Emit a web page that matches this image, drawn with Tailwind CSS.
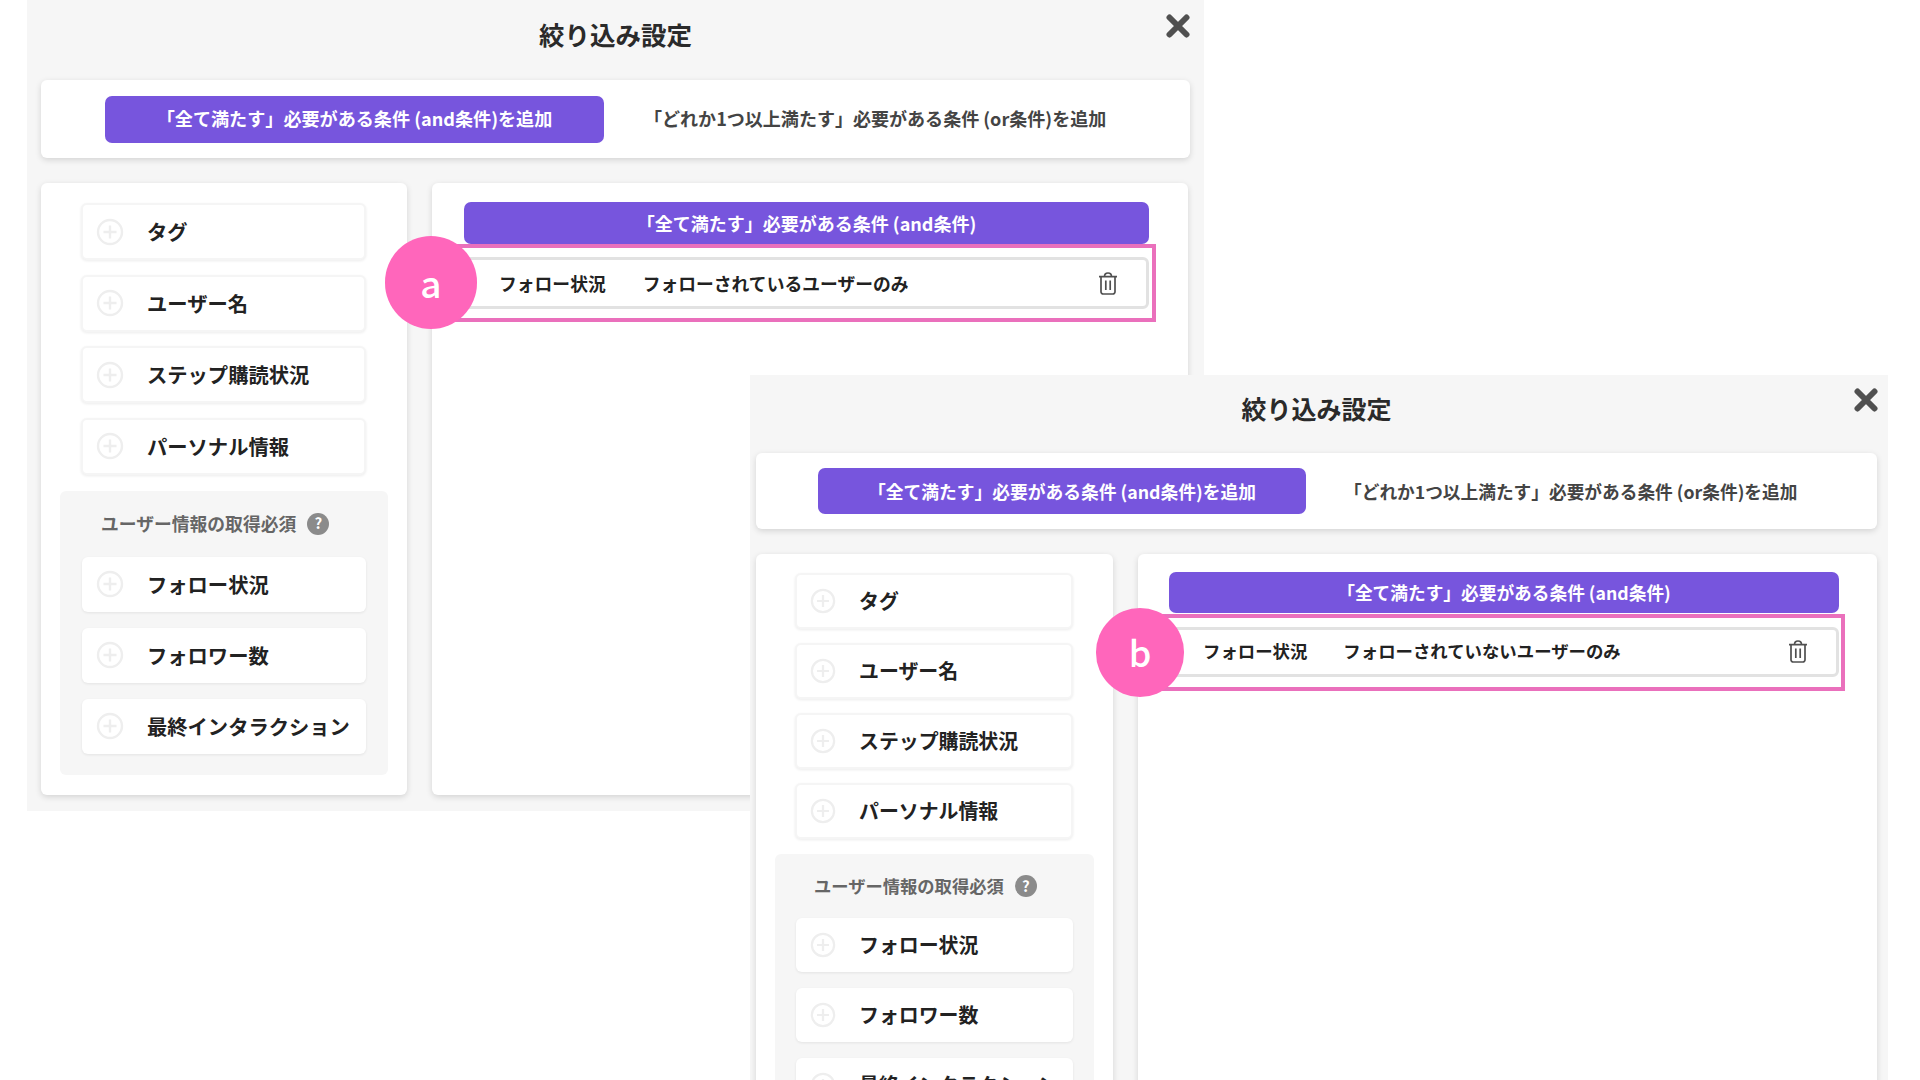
<!DOCTYPE html>
<html lang="ja">
  <head>
    <meta charset="UTF-8" />
    <title>絞り込み設定</title>
    <script src="https://cdn.jsdelivr.net/npm/@tailwindcss/browser@4"></script>
  </head>

  <body class="bg-white text-[#222] font-['Noto_Sans_CJK_JP',sans-serif] font-medium antialiased">
    <div class="relative w-[1920px] h-[1080px] overflow-hidden">

      <!-- ── Window a (back) ── -->
      <div class="absolute left-[27px] top-0 w-[1177px] h-[811px] bg-[#f6f6f6] px-[14px]">
        <div class="relative h-[80px] pt-[15px] text-center text-[25.5px] leading-[38px] font-bold text-[#2a2a2a]">
          絞り込み設定
          <svg class="absolute right-0 top-[14px] w-[24px] h-[24px]" viewBox="0 0 24 24" fill="none" stroke="#505050" stroke-width="6" stroke-linecap="round"><path d="M3.5 3.5 20.5 20.5M20.5 3.5 3.5 20.5" /></svg>
        </div>

        <!-- tab bar -->
        <div class="h-[78px] bg-white rounded-md shadow-[0_2px_6px_rgba(0,0,0,0.14)] flex items-center pl-[64px]">
          <div class="w-[499px] h-[47px] rounded-[7px] bg-[#7755dd] text-white text-[18.1px] font-bold flex items-center justify-center">「全て満たす」必要がある条件 (and条件)を追加</div>
          <div class="ml-[40px] text-[18.05px] font-bold text-[#444]">「どれか1つ以上満たす」必要がある条件 (or条件)を追加</div>
        </div>

        <div class="flex gap-[25px] mt-[25px]">
          <!-- left: field list -->
          <div class="w-[366px] h-[612px] bg-white rounded-md shadow-[0_2px_6px_rgba(0,0,0,0.14)] pt-[20px]">
            <div class="flex flex-col gap-[14.5px] pl-[40px] pr-[41px] text-[20.3px] font-bold">
              <div class="h-[57px] flex items-center bg-white rounded-md border-2 border-[#f5f5f5] shadow-[0_1px_3px_rgba(0,0,0,0.08)]">
                <svg class="ml-[13px] w-[28px] h-[28px] shrink-0" viewBox="0 0 28 28" fill="none" stroke="#eeeeee" stroke-width="2.4"><circle cx="14" cy="14" r="12" /><path d="M14 7.5v13M7.5 14h13" /></svg>
                <span class="ml-[23px]">タグ</span>
              </div>
              <div class="h-[57px] flex items-center bg-white rounded-md border-2 border-[#f5f5f5] shadow-[0_1px_3px_rgba(0,0,0,0.08)]">
                <svg class="ml-[13px] w-[28px] h-[28px] shrink-0" viewBox="0 0 28 28" fill="none" stroke="#eeeeee" stroke-width="2.4"><circle cx="14" cy="14" r="12" /><path d="M14 7.5v13M7.5 14h13" /></svg>
                <span class="ml-[23px]">ユーザー名</span>
              </div>
              <div class="h-[57px] flex items-center bg-white rounded-md border-2 border-[#f5f5f5] shadow-[0_1px_3px_rgba(0,0,0,0.08)]">
                <svg class="ml-[13px] w-[28px] h-[28px] shrink-0" viewBox="0 0 28 28" fill="none" stroke="#eeeeee" stroke-width="2.4"><circle cx="14" cy="14" r="12" /><path d="M14 7.5v13M7.5 14h13" /></svg>
                <span class="ml-[23px]">ステップ購読状況</span>
              </div>
              <div class="h-[57px] flex items-center bg-white rounded-md border-2 border-[#f5f5f5] shadow-[0_1px_3px_rgba(0,0,0,0.08)]">
                <svg class="ml-[13px] w-[28px] h-[28px] shrink-0" viewBox="0 0 28 28" fill="none" stroke="#eeeeee" stroke-width="2.4"><circle cx="14" cy="14" r="12" /><path d="M14 7.5v13M7.5 14h13" /></svg>
                <span class="ml-[23px]">パーソナル情報</span>
              </div>
            </div>
            <!-- gray group -->
            <div class="mx-[19px] mt-[16px] h-[284.5px] bg-[#f6f6f6] rounded-md">
              <div class="h-[66px] flex items-center pl-[41px] text-[17.8px] font-bold text-[#666]">
                ユーザー情報の取得必須
                <span class="ml-[11px] w-[22px] h-[22px] rounded-full bg-[#8b8b8b] text-white text-[15px] font-bold flex items-center justify-center">?</span>
              </div>
              <div class="flex flex-col gap-[16px] pl-[22px] pr-[22px] text-[20.3px] font-bold">
                <div class="h-[55px] flex items-center bg-white rounded-md shadow-[0_1px_3px_rgba(0,0,0,0.08)]">
                  <svg class="ml-[14px] w-[28px] h-[28px] shrink-0" viewBox="0 0 28 28" fill="none" stroke="#eeeeee" stroke-width="2.4"><circle cx="14" cy="14" r="12" /><path d="M14 7.5v13M7.5 14h13" /></svg>
                  <span class="ml-[23px]">フォロー状況</span>
                </div>
                <div class="h-[55px] flex items-center bg-white rounded-md shadow-[0_1px_3px_rgba(0,0,0,0.08)]">
                  <svg class="ml-[14px] w-[28px] h-[28px] shrink-0" viewBox="0 0 28 28" fill="none" stroke="#eeeeee" stroke-width="2.4"><circle cx="14" cy="14" r="12" /><path d="M14 7.5v13M7.5 14h13" /></svg>
                  <span class="ml-[23px]">フォロワー数</span>
                </div>
                <div class="h-[55px] flex items-center bg-white rounded-md shadow-[0_1px_3px_rgba(0,0,0,0.08)]">
                  <svg class="ml-[14px] w-[28px] h-[28px] shrink-0" viewBox="0 0 28 28" fill="none" stroke="#eeeeee" stroke-width="2.4"><circle cx="14" cy="14" r="12" /><path d="M14 7.5v13M7.5 14h13" /></svg>
                  <span class="ml-[23px] whitespace-nowrap">最終インタラクション</span>
                </div>
              </div>
            </div>
          </div>

          <!-- right: selected conditions -->
          <div class="relative w-[756px] h-[612px] bg-white rounded-md shadow-[0_2px_6px_rgba(0,0,0,0.14)] pt-[19px] pl-[32px] pr-[39px]">
            <div class="h-[42px] rounded-[7px] bg-[#7755dd] text-white text-[18px] font-bold flex items-center justify-center">「全て満たす」必要がある条件 (and条件)</div>
            <div class="mt-[13px] h-[52px] flex items-center bg-white rounded-md border-[3px] border-[#e2e2e2] pl-[32px] pr-[28px] text-[17.8px] font-bold">
              <span>フォロー状況</span>
              <span class="ml-[37px]">フォローされているユーザーのみ</span>
              <svg class="ml-auto w-[20px] h-[23px]" viewBox="0 0 20 23" fill="none" stroke="#505050" stroke-width="1.7"><path d="M1 4.6h18M6.5 4.4C6.5 2 8 1 10 1s3.5 1 3.5 3.4M3 4.6v15.2A2.2 2.2 0 0 0 5.2 22h9.6a2.2 2.2 0 0 0 2.2-2.2V4.6M7.8 8.5v9.5M12.2 8.5v9.5" /></svg>
            </div>
            <!-- annotation a -->
            <div class="absolute left-[8px] top-[61px] w-[716px] h-[78px] border-[4px] border-[#ea70bc]"></div>
            <div class="absolute left-[-47px] top-[53px] w-[92px] h-[93px] rounded-full bg-[#ff66bb] text-white text-[37px] flex items-center justify-center">a</div>
          </div>
        </div>
      </div>

      <!-- ── Window b (front) ── -->
      <div class="absolute left-[750px] top-[375px] w-[1138px] h-[705px] bg-[#f6f6f6] pl-[6px] pr-[11px] overflow-hidden">
        <div class="relative h-[78px] pt-[14px] text-center text-[25px] leading-[38px] font-bold text-[#2a2a2a]">
          絞り込み設定
          <svg class="absolute right-[-1px] top-[13px] w-[24px] h-[24px]" viewBox="0 0 24 24" fill="none" stroke="#505050" stroke-width="6" stroke-linecap="round"><path d="M3.5 3.5 20.5 20.5M20.5 3.5 3.5 20.5" /></svg>
        </div>

        <div class="h-[76px] bg-white rounded-md shadow-[0_2px_6px_rgba(0,0,0,0.14)] flex items-center pl-[62px]">
          <div class="w-[488px] h-[46px] rounded-[7px] bg-[#7755dd] text-white text-[17.75px] font-bold flex items-center justify-center">「全て満たす」必要がある条件 (and条件)を追加</div>
          <div class="ml-[38px] text-[17.7px] font-bold text-[#444]">「どれか1つ以上満たす」必要がある条件 (or条件)を追加</div>
        </div>

        <div class="flex gap-[25px] mt-[25px]">
          <div class="w-[357px] h-[600px] bg-white rounded-md shadow-[0_2px_6px_rgba(0,0,0,0.14)] pt-[19px]">
            <div class="flex flex-col gap-[14px] pl-[39px] pr-[40px] text-[19.9px] font-bold">
              <div class="h-[56px] flex items-center bg-white rounded-md border-2 border-[#f5f5f5] shadow-[0_1px_3px_rgba(0,0,0,0.08)]">
                <svg class="ml-[13px] w-[26px] h-[26px] shrink-0" viewBox="0 0 28 28" fill="none" stroke="#eeeeee" stroke-width="2.4"><circle cx="14" cy="14" r="12" /><path d="M14 7.5v13M7.5 14h13" /></svg>
                <span class="ml-[23px]">タグ</span>
              </div>
              <div class="h-[56px] flex items-center bg-white rounded-md border-2 border-[#f5f5f5] shadow-[0_1px_3px_rgba(0,0,0,0.08)]">
                <svg class="ml-[13px] w-[26px] h-[26px] shrink-0" viewBox="0 0 28 28" fill="none" stroke="#eeeeee" stroke-width="2.4"><circle cx="14" cy="14" r="12" /><path d="M14 7.5v13M7.5 14h13" /></svg>
                <span class="ml-[23px]">ユーザー名</span>
              </div>
              <div class="h-[56px] flex items-center bg-white rounded-md border-2 border-[#f5f5f5] shadow-[0_1px_3px_rgba(0,0,0,0.08)]">
                <svg class="ml-[13px] w-[26px] h-[26px] shrink-0" viewBox="0 0 28 28" fill="none" stroke="#eeeeee" stroke-width="2.4"><circle cx="14" cy="14" r="12" /><path d="M14 7.5v13M7.5 14h13" /></svg>
                <span class="ml-[23px]">ステップ購読状況</span>
              </div>
              <div class="h-[56px] flex items-center bg-white rounded-md border-2 border-[#f5f5f5] shadow-[0_1px_3px_rgba(0,0,0,0.08)]">
                <svg class="ml-[13px] w-[26px] h-[26px] shrink-0" viewBox="0 0 28 28" fill="none" stroke="#eeeeee" stroke-width="2.4"><circle cx="14" cy="14" r="12" /><path d="M14 7.5v13M7.5 14h13" /></svg>
                <span class="ml-[23px]">パーソナル情報</span>
              </div>
            </div>
            <div class="mx-[19px] mt-[15px] h-[300px] bg-[#f6f6f6] rounded-t-md">
              <div class="h-[64px] flex items-center pl-[39px] text-[17.3px] font-bold text-[#666]">
                ユーザー情報の取得必須
                <span class="ml-[11px] w-[22px] h-[22px] rounded-full bg-[#8b8b8b] text-white text-[15px] font-bold flex items-center justify-center">?</span>
              </div>
              <div class="flex flex-col gap-[16px] pl-[21px] pr-[21px] text-[19.9px] font-bold">
                <div class="h-[54px] flex items-center bg-white rounded-md shadow-[0_1px_3px_rgba(0,0,0,0.08)]">
                  <svg class="ml-[14px] w-[26px] h-[26px] shrink-0" viewBox="0 0 28 28" fill="none" stroke="#eeeeee" stroke-width="2.4"><circle cx="14" cy="14" r="12" /><path d="M14 7.5v13M7.5 14h13" /></svg>
                  <span class="ml-[23px]">フォロー状況</span>
                </div>
                <div class="h-[54px] flex items-center bg-white rounded-md shadow-[0_1px_3px_rgba(0,0,0,0.08)]">
                  <svg class="ml-[14px] w-[26px] h-[26px] shrink-0" viewBox="0 0 28 28" fill="none" stroke="#eeeeee" stroke-width="2.4"><circle cx="14" cy="14" r="12" /><path d="M14 7.5v13M7.5 14h13" /></svg>
                  <span class="ml-[23px]">フォロワー数</span>
                </div>
                <div class="h-[54px] flex items-center bg-white rounded-md shadow-[0_1px_3px_rgba(0,0,0,0.08)]">
                  <svg class="ml-[14px] w-[26px] h-[26px] shrink-0" viewBox="0 0 28 28" fill="none" stroke="#eeeeee" stroke-width="2.4"><circle cx="14" cy="14" r="12" /><path d="M14 7.5v13M7.5 14h13" /></svg>
                  <span class="ml-[23px] whitespace-nowrap">最終インタラクション</span>
                </div>
              </div>
            </div>
          </div>

          <div class="relative w-[739px] h-[600px] bg-white rounded-md shadow-[0_2px_6px_rgba(0,0,0,0.14)] pt-[18px] pl-[31px] pr-[38px]">
            <div class="h-[41px] rounded-[7px] bg-[#7755dd] text-white text-[17.7px] font-bold flex items-center justify-center">「全て満たす」必要がある条件 (and条件)</div>
            <div class="mt-[14px] h-[50px] pb-[1px] flex items-center bg-white rounded-md border-[3px] border-[#e2e2e2] pl-[31px] pr-[28px] text-[17.4px] font-bold">
              <span>フォロー状況</span>
              <span class="ml-[36px]">フォローされていないユーザーのみ</span>
              <svg class="ml-auto w-[20px] h-[23px]" viewBox="0 0 20 23" fill="none" stroke="#505050" stroke-width="1.7"><path d="M1 4.6h18M6.5 4.4C6.5 2 8 1 10 1s3.5 1 3.5 3.4M3 4.6v15.2A2.2 2.2 0 0 0 5.2 22h9.6a2.2 2.2 0 0 0 2.2-2.2V4.6M7.8 8.5v9.5M12.2 8.5v9.5" /></svg>
            </div>
            <!-- annotation b -->
            <div class="absolute left-[7px] top-[60px] w-[700px] h-[77px] border-[4px] border-[#ea70bc]"></div>
            <div class="absolute left-[-42px] top-[54px] w-[88px] h-[89px] pb-[3px] rounded-full bg-[#ff66bb] text-white text-[36px] flex items-center justify-center">b</div>
          </div>
        </div>
      </div>

    </div>
  </body>
</html>
